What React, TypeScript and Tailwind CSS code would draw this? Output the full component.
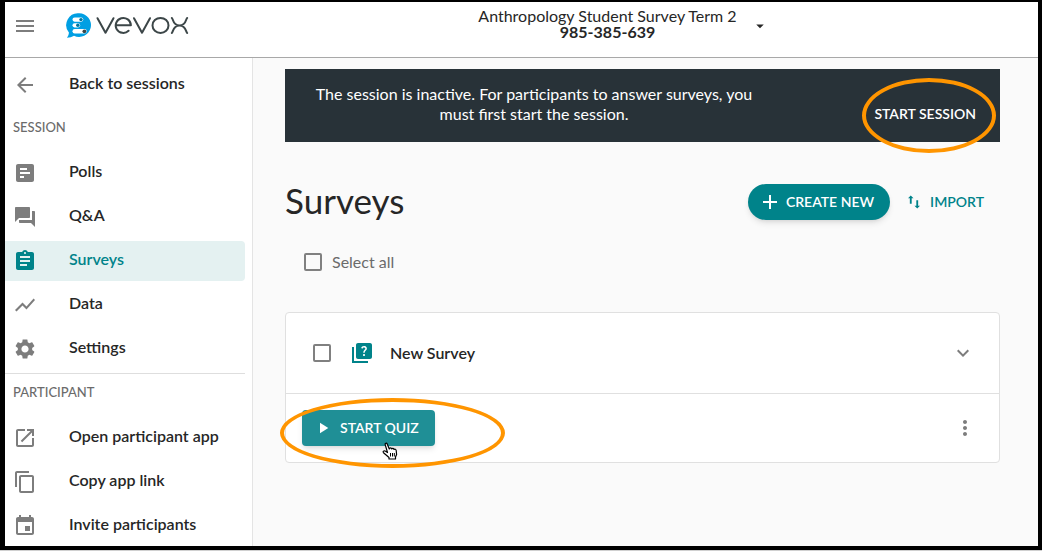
import React from "react";

type IconProps = { d: string; className?: string; box?: string };

function Icon({ d, className = "size-6", box = "0 0 24 24" }: IconProps) {
  return (
    <svg viewBox={box} className={`shrink-0 fill-current ${className}`} aria-hidden="true">
      <path fillRule="evenodd" d={d} />
    </svg>
  );
}

const paths = {
  menu: "M3 18h18v-2H3v2zm0-5h18v-2H3v2zm0-7v2h18V6H3z",
  back: "M20 11H7.83l5.59-5.59L12 4l-8 8 8 8 1.41-1.41L7.83 13H20v-2z",
  polls:
    "M19 3H5c-1.1 0-2 .9-2 2v14c0 1.1.9 2 2 2h14c1.1 0 2-.9 2-2V5c0-1.1-.9-2-2-2zM7 7h7v2H7V7zm0 4h10v2H7v-2zm0 4h4v2H7v-2z",
  qa: "M21 6h-2v9H6v2c0 .55.45 1 1 1h11l4 4V7c0-.55-.45-1-1-1zm-4 6V3c0-.55-.45-1-1-1H3c-.55 0-1 .45-1 1v14l4-4h10c.55 0 1-.45 1-1z",
  surveys:
    "M19 3h-4.18C14.4 1.84 13.3 1 12 1c-1.3 0-2.4.84-2.82 2H5c-1.1 0-2 .9-2 2v14c0 1.1.9 2 2 2h14c1.1 0 2-.9 2-2V5c0-1.1-.9-2-2-2zm-7 0c.55 0 1 .45 1 1s-.45 1-1 1-1-.45-1-1 .45-1 1-1zm2 14H7v-2h7v2zm3-4H7v-2h10v2zm0-4H7V7h10v2z",
  data: "M3.5 18.49l6-6.01 4 4L22 6.92l-1.41-1.41-7.09 7.97-4-4L2 16.99z",
  settings:
    "M19.14 12.94c.04-.3.06-.61.06-.94 0-.32-.02-.64-.07-.94l2.03-1.58c.18-.14.23-.41.12-.61l-1.92-3.32c-.12-.22-.37-.29-.59-.22l-2.39.96c-.5-.38-1.03-.7-1.62-.94l-.36-2.54c-.04-.24-.24-.41-.48-.41h-3.84c-.24 0-.43.17-.47.41l-.36 2.54c-.59.24-1.13.57-1.62.94l-2.39-.96c-.22-.08-.47 0-.59.22L2.74 8.87c-.12.21-.08.47.12.61l2.03 1.58c-.05.3-.09.63-.09.94s.02.64.07.94l-2.03 1.58c-.18.14-.23.41-.12.61l1.92 3.32c.12.22.37.29.59.22l2.39-.96c.5.38 1.03.7 1.62.94l.36 2.54c.05.24.24.41.48.41h3.84c.24 0 .44-.17.47-.41l.36-2.54c.59-.24 1.13-.56 1.62-.94l2.39.96c.22.08.47 0 .59-.22l1.92-3.32c.12-.22.07-.47-.12-.61l-2.01-1.58zM12 15.6c-1.98 0-3.6-1.62-3.6-3.6s1.62-3.6 3.6-3.6 3.6 1.62 3.6 3.6-1.62 3.6-3.6 3.6z",
  open: "M19 19H5V5h7V3H5c-1.11 0-2 .9-2 2v14c0 1.1.89 2 2 2h14c1.1 0 2-.9 2-2v-7h-2v7zM14 3v2h3.59l-9.83 9.83 1.41 1.41L19 6.41V10h2V3h-7z",
  copy: "M16 1H4c-1.1 0-2 .9-2 2v14h2V3h12V1zm3 4H8c-1.1 0-2 .9-2 2v14c0 1.1.9 2 2 2h11c1.1 0 2-.9 2-2V7c0-1.1-.9-2-2-2zm0 16H8V7h11v14z",
  invite:
    "M17 12h-5v5h5v-5zM16 1v2H8V1H6v2H5c-1.11 0-1.99.9-1.99 2L3 19c0 1.1.89 2 2 2h14c1.1 0 2-.9 2-2V5c0-1.1-.9-2-2-2h-1V1h-2zm3 18H5V8h14v11z",
  caret: "M7 10l5 5 5-5z",
  plus: "M19 13h-6v6h-2v-6H5v-2h6V5h2v6h6v2z",
  chevron: "M16.59 8.59L12 13.17 7.41 8.59 6 10l6 6 6-6z",
  dots: "M12 8c1.1 0 2-.9 2-2s-.9-2-2-2-2 .9-2 2 .9 2 2 2zm0 2c-1.1 0-2 .9-2 2s.9 2 2 2 2-.9 2-2-.9-2-2-2zm0 6c-1.1 0-2 .9-2 2s.9 2 2 2 2-.9 2-2-.9-2-2-2z",
  play: "M8 5v14l11-7z",
};

function Logo() {
  return (
    <svg viewBox="0 0 124 28" className="h-7 w-31" role="img" aria-label="vevox">
      <g transform="translate(1.7 0)">
        <path fill="#009fe3" d="M12.5 1.3a11.8 11.8 0 1 1-5.2 22.4C5.3 25 3 25.6.2 25.7c1.3-1.5 2-3.400 2-5.200A11.800 11.800 0 0 1 12.500 1.300z" />
        <g fill="#fff">
          <rect x="5.800" y="5.500" width="10.800" height="4.200" rx="2.100" />
          <rect x="5.800" y="11.200" width="7.600" height="4.200" rx="2.100" />
          <rect x="5.800" y="17.100" width="14.200" height="4.400" rx="2.200" />
        </g>
        <circle cx="14.300" cy="7.600" r="1.700" fill="#00759f" />
        <circle cx="11.100" cy="13.300" r="1.700" fill="#00759f" />
        <circle cx="17.700" cy="19.300" r="1.900" fill="#3c4648" />
      </g>
      <g fill="none" stroke="#3c4648" strokeWidth="2" strokeLinecap="round" strokeLinejoin="round">
        <path d="M32.500 6.200l8 14.500 8-14.500" />
        <path d="M50.700 13.200h15.200a7.600 7.500 0 1 0-2.300 5.600" />
        <path d="M69 6.200l8 14.500 8-14.500" />
        <ellipse cx="95.500" cy="13.400" rx="8" ry="7.500" />
        <path d="M106.800 5.900c1.200 0 .8 7.500 7.700 7.500s6.500-7.500 7.700-7.500M106.800 20.900c1.200 0 .8-7.500 7.700-7.500s6.500 7.500 7.700 7.500" />
      </g>
    </svg>
  );
}

function NavItem({ label, icon, active = false }: { label: string; icon: string; active?: boolean }) {
  return (
    <li>
      <a
        href="#"
        aria-current={active ? "page" : undefined}
        className={`flex h-10 items-center gap-8 rounded-r pl-2 text-base font-semibold ${
          active ? "bg-[#e4f1f1] text-[#00838a]" : "text-[#262626]"
        }`}
      >
        <span className={active ? "text-[#00838a]" : "text-[#7d7d7d]"}>
          <Icon d={icon} />
        </span>
        <span className="pb-1">{label}</span>
      </a>
    </li>
  );
}

function Sidebar() {
  return (
    <nav className="w-[248px] shrink-0 border-r border-[#e4e4e4] bg-white pt-[7px] pr-[7px]">
      <ul>
        <NavItem label="Back to sessions" icon={paths.back} />
      </ul>
      <h2 className="mt-3.5 pl-2 text-[13px] leading-4 font-medium text-[#6b6b6b]">SESSION</h2>
      <ul className="mt-[18px] flex flex-col gap-1">
        <NavItem label="Polls" icon={paths.polls} />
        <NavItem label="Q&A" icon={paths.qa} />
        <NavItem label="Surveys" icon={paths.surveys} active />
        <NavItem label="Data" icon={paths.data} />
        <NavItem label="Settings" icon={paths.settings} />
      </ul>
      <hr className="mt-1 border-[#dedede]" />
      <h2 className="mt-2.5 pl-2 text-[13px] leading-4 font-medium text-[#6b6b6b]">PARTICIPANT</h2>
      <ul className="mt-[18px] flex flex-col gap-1">
        <NavItem label="Open participant app" icon={paths.open} />
        <NavItem label="Copy app link" icon={paths.copy} />
        <NavItem label="Invite participants" icon={paths.invite} />
      </ul>
    </nav>
  );
}

const checkbox = "size-[18px] shrink-0 appearance-none rounded-xs border-2 border-[#808080] bg-transparent";

function Highlight({ className }: { className: string }) {
  return <span aria-hidden="true" className={`pointer-events-none absolute rounded-[50%] border-[#ff9500] ${className}`} />;
}

function HandCursor() {
  return (
    <svg viewBox="0 0 16 18" className="absolute top-8 left-20 h-[18px] w-4" aria-hidden="true">
      <path
        fill="#fff"
        stroke="#000"
        strokeWidth="1.200"
        strokeLinejoin="round"
        d="M5.500 10.500L3.200 2.600C2.800 1.200 4.600.500 5.200 1.900L7.300 7C7.600 5.600 9.400 5.600 9.700 7 10.200 5.900 11.800 6.100 12 7.500 12.800 6.700 14 7.300 14.200 8.500L14.600 12.500 13.500 15V17H7V15.500L1.500 10.700C.500 9.500 2 8.300 3.200 9.100z"
      />
      <path fill="none" stroke="#000" d="M8.500 11v3.500M10.500 11v3.500M12.300 11v3.500" />
    </svg>
  );
}

export default function App() {
  return (
    <div className="flex min-h-screen flex-col bg-[#d0d0d0] pb-0.5 font-[Lato,sans-serif] text-[#262626]">
      <div className="flex flex-1 flex-col border-t-2 border-r-4 border-b-4 border-l-5 border-black bg-[#fafafa]">
        <header className="flex h-14 border-b border-[#a8a8a8] bg-white">
          <div className="flex w-[248px] shrink-0 items-center gap-7 pb-2 pl-2">
            <button aria-label="Menu" className="text-[#7d7d7d]">
              <Icon d={paths.menu} />
            </button>
            <Logo />
          </div>
          <div className="flex flex-1 justify-center pr-10">
            <button className="flex items-center gap-2.5">
              <span className="pb-3 text-center text-base leading-4">
                Anthropology Student Survey Term 2
                <strong className="block">985-385-639</strong>
              </span>
              <span className="px-1 pb-2">
                <Icon d={paths.caret} className="size-[18px]" />
              </span>
            </button>
          </div>
        </header>

        <div className="flex flex-1">
          <Sidebar />
          <main className="min-w-0 flex-1 pt-[11px] pr-[38px] pl-8">
            <section className="flex h-[73px] items-center justify-between bg-[#283238] px-6 text-white">
              <p className="max-w-[450px] pb-1 text-center text-base leading-5">
                The session is inactive. For participants to answer surveys, you must first start the session.
              </p>
              <button className="relative pt-4 text-sm font-semibold">
                START SESSION
                <Highlight className="-top-2.5 -left-3 h-[75px] w-[134px] border-4" />
              </button>
            </section>

            <div className="mt-9 flex h-12 items-center">
              <h1 className="flex-1 pb-1 text-[35px] leading-10">Surveys</h1>
              <button className="flex h-9 items-center gap-1 rounded-full bg-[#00838a] pr-4 pl-2.5 text-sm font-semibold text-white shadow-md">
                <Icon d={paths.plus} />
                CREATE NEW
              </button>
              <button className="flex items-center gap-2.5 pr-4 pl-[18px] text-sm font-semibold text-[#00838a]">
                <Icon d="M3 0L0 3h2v6h2V3h2zM9 5v6H7l3 3 3-3h-2V5z" box="0 0 13 14" className="h-3.5 w-3" />
                IMPORT
              </button>
            </div>

            <label className="mt-6 flex w-fit items-center gap-2.5 pl-[19px] text-base text-[#6b6b6b]">
              <input type="checkbox" className={checkbox} />
              Select all
            </label>

            <article className="mt-[38px] rounded border border-[#e0e0e0] bg-white">
              <div className="flex h-20 items-center pr-6 pl-[27px]">
                <input id="new-survey" type="checkbox" className={checkbox} />
                <svg viewBox="0 0 24 24" className="ml-[19px] size-6 text-[#00838a]" aria-hidden="true">
                  <path fill="currentColor" d="M4 6H2v16h16v-2H4V6z" />
                  <path
                    fill="currentColor"
                    fillRule="evenodd"
                    d="M20 2H8c-1.100 0-2 .900-2 2v12c0 1.100.900 2 2 2h12c1.100 0 2-.900 2-2V4c0-1.100-.900-2-2-2zm-5.990 13c-.590 0-1.050-.470-1.050-1.050 0-.590.470-1.040 1.050-1.040.590 0 1.040.450 1.040 1.040-.010.580-.450 1.050-1.040 1.050zm2.500-6.170c-.630.930-1.230 1.210-1.560 1.810-.130.240-.180.400-.180 1.180h-1.520c0-.410-.060-1.080.260-1.650.410-.730 1.180-1.160 1.630-1.800.480-.680.210-1.940-1.140-1.940-.880 0-1.320.670-1.500 1.230l-1.370-.570C11.510 5.960 12.520 5 13.990 5c1.230 0 2.080.560 2.510 1.260.370.600.580 1.730.010 2.570z"
                  />
                </svg>
                <label htmlFor="new-survey" className="ml-4 flex-1 text-base font-semibold">
                  New Survey
                </label>
                <button aria-label="Expand" className="text-[#7d7d7d]">
                  <Icon d={paths.chevron} />
                </button>
              </div>
              <div className="flex h-[69px] items-center justify-between border-t border-[#e0e0e0] px-4">
                <div className="relative">
                  <button className="flex h-9 items-center gap-2 rounded bg-[#1f8f96] pr-4 pl-3 text-sm font-semibold text-white shadow-md">
                    <Icon d={paths.play} className="size-[18px]" />
                    START QUIZ
                  </button>
                  <Highlight className="-top-3 -left-[22px] h-[70px] w-[225px] border-4" />
                  <HandCursor />
                </div>
                <button aria-label="More options" className="pr-1.5 text-[#7d7d7d]">
                  <Icon d={paths.dots} />
                </button>
              </div>
            </article>
          </main>
        </div>
      </div>
    </div>
  );
}
